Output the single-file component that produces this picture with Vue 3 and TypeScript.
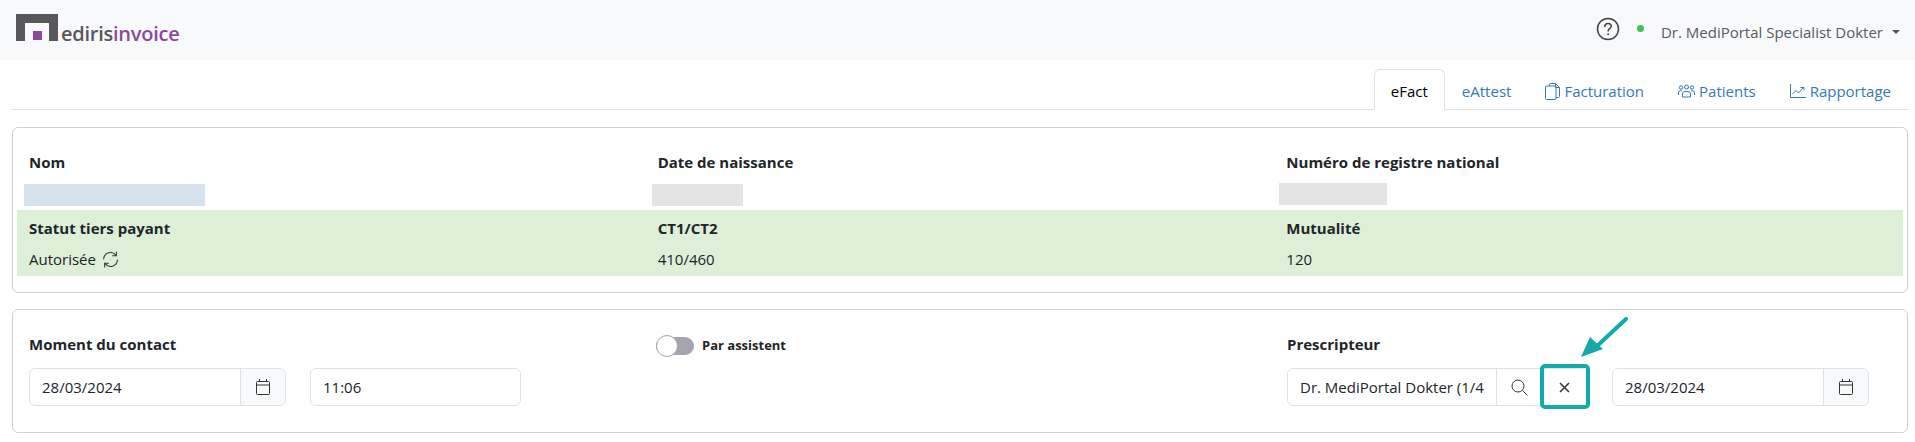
<template>
  <div class="page">
    <header class="topbar">
      <div class="logo">
        <svg class="logo-mark" width="44" height="27" viewBox="0 0 44 27">
          <path d="M0 0h42v27h-9V9H9v18H0z" fill="#58585a" />
          <rect x="17" y="17" width="9" height="9" fill="#8b4a9c" />
        </svg>
        <span class="logo-grey">ediris</span><span class="logo-purple">invoice</span>
      </div>
      <div class="user-area">
        <svg class="help" width="24" height="24" viewBox="0 0 24 24" fill="none" stroke="#444" stroke-width="1.5">
          <circle cx="12" cy="12" r="10.5" />
          <path d="M8.8 9.4c0-1.9 1.4-3 3.3-3 1.8 0 3.2 1.1 3.2 2.8 0 2.4-3.2 2.5-3.2 4.9" stroke-linecap="round" />
          <circle cx="12.1" cy="17.3" r="1" fill="#444" stroke="none" />
        </svg>
        <span class="status-dot"></span>
        <span class="user-name">Dr. MediPortal Specialist Dokter</span>
        <span class="caret"></span>
      </div>
    </header>

    <main class="content">
      <nav class="tabs">
        <a class="tab active">eFact</a>
        <a class="tab">eAttest</a>
        <a class="tab">
          <svg width="15" height="17" viewBox="0 0 15 17" fill="none" stroke="currentColor" stroke-width="1">
            <path d="M4.500 3V1.500a1 1 0 0 1 1-1h5l4 4v9a1 1 0 0 1-1 1h-2.500" />
            <rect x="0.500" y="3" width="10.500" height="13.500" rx="1" />
            <path d="M10.500.5v4h4" />
          </svg>
          Facturation
        </a>
        <a class="tab">
          <svg width="17" height="14" viewBox="0 0 17 14" fill="none" stroke="currentColor" stroke-width="1">
            <circle cx="8.500" cy="3" r="2" />
            <circle cx="3" cy="3.500" r="1.700" />
            <circle cx="14" cy="3.500" r="1.700" />
            <path d="M4.500 13v-3a2.500 2.500 0 0 1 2.500-2.500h3a2.500 2.500 0 0 1 2.500 2.500v3z" />
            <path d="M.5 11V8.500A1.800 1.800 0 0 1 2.300 6.800H4M16.500 11V8.500a1.800 1.800 0 0 0-1.800-1.700H13" />
          </svg>
          Patients
        </a>
        <a class="tab">
          <svg width="16" height="14" viewBox="0 0 16 14" fill="none" stroke="currentColor" stroke-width="1">
            <path d="M.5 0v13.500H16" />
            <path d="M2.500 10l3.500-3.500 2.500 2.500 5-5.500" />
            <path d="M10.500 3.500h3.500v3" />
          </svg>
          Rapportage
        </a>
      </nav>

      <section class="card patient-card">
        <div class="info-row">
          <div class="info-cell">
            <div class="label">Nom</div>
            <div class="redacted redacted-name"></div>
          </div>
          <div class="info-cell">
            <div class="label">Date de naissance</div>
            <div class="redacted redacted-birth"></div>
          </div>
          <div class="info-cell">
            <div class="label">Numéro de registre national</div>
            <div class="redacted redacted-nrn"></div>
          </div>
        </div>
        <div class="info-row insured">
          <div class="info-cell">
            <div class="label">Statut tiers payant</div>
            <div class="value">
              Autorisée
              <svg class="refresh" width="17" height="17" viewBox="0 0 16 16" fill="none" stroke="#333" stroke-width="1" stroke-linecap="round">
                <path d="M1.500 7.500A6.500 6.500 0 0 1 13 3.800" />
                <path d="M14.500 8.500A6.500 6.500 0 0 1 3 12.200" />
                <path d="M13.500 1v3.500H10M2.500 15v-3.500H6" />
              </svg>
            </div>
          </div>
          <div class="info-cell">
            <div class="label">CT1/CT2</div>
            <div class="value">410/460</div>
          </div>
          <div class="info-cell">
            <div class="label">Mutualité</div>
            <div class="value">120</div>
          </div>
        </div>
      </section>

      <section class="card contact-card">
        <div class="contact-col">
          <div class="label">Moment du contact</div>
          <div class="field-line">
            <div class="input-group date-group">
              <span class="input-text">28/03/2024</span>
              <span class="addon">
                <svg width="14" height="16" viewBox="0 0 14 16" fill="none" stroke="#333" stroke-width="1">
                  <rect x="0.500" y="2.500" width="13" height="13" rx="1" />
                  <path d="M0.500 6h13M3.500 0v2.500M10.500 0v2.500" />
                </svg>
              </span>
            </div>
            <div class="input-group time-group">
              <span class="input-text">11:06</span>
            </div>
          </div>
        </div>

        <div class="contact-col toggle-col">
          <div class="toggle">
            <span class="toggle-track"></span>
            <span class="toggle-knob"></span>
          </div>
          <span class="toggle-label">Par assistent</span>
        </div>

        <div class="contact-col">
          <div class="label">Prescripteur</div>
          <div class="field-line">
            <div class="input-group prescriber-group">
              <span class="input-text">Dr. MediPortal Dokter (1/4</span>
              <span class="addon plain">
                <svg width="17" height="17" viewBox="0 0 17 17" fill="none" stroke="#333" stroke-width="1">
                  <circle cx="7" cy="7" r="6" />
                  <path d="M11.500 11.500l5 5" />
                </svg>
              </span>
              <span class="addon plain clear">
                <svg width="11" height="11" viewBox="0 0 11 11" fill="none" stroke="#333" stroke-width="1.500">
                  <path d="M1 1l9 9M10 1l-9 9" />
                </svg>
              </span>
              <span class="highlight"></span>
              <svg class="arrow" width="50" height="42" viewBox="0 0 50 42">
                <path d="M47 2L17 30" stroke="#14a9ab" stroke-width="4" stroke-linecap="round" fill="none" />
                <path d="M2 40L11 20L24 32z" fill="#14a9ab" />
              </svg>
            </div>
            <div class="input-group date-group second">
              <span class="input-text">28/03/2024</span>
              <span class="addon">
                <svg width="14" height="16" viewBox="0 0 14 16" fill="none" stroke="#333" stroke-width="1">
                  <rect x="0.500" y="2.500" width="13" height="13" rx="1" />
                  <path d="M0.500 6h13M3.500 0v2.500M10.500 0v2.500" />
                </svg>
              </span>
            </div>
          </div>
        </div>
      </section>
    </main>
  </div>
</template>

<script setup lang="ts">
</script>

<style>
html,
body {
  margin: 0;
  background: #fff;
}
</style>

<style scoped>
.page {
  font-family: "Open Sans", "Noto Sans", sans-serif;
  font-size: 15px;
  line-height: 21px;
  color: #212529;
}

.topbar {
  height: 60px;
  box-sizing: border-box;
  background: #f8f9fa;
  display: flex;
  justify-content: space-between;
  padding: 0 15px 0 16px;
}

.logo {
  display: flex;
  align-items: flex-end;
  height: 47px;
  font-size: 20px;
  line-height: 27px;
  font-weight: 600;
  letter-spacing: -0.25px;
}

.logo-mark {
  margin-right: 1px;
  margin-bottom: 6px;
}

.logo-grey {
  color: #58585a;
}

.logo-purple {
  color: #8b4a9c;
}

.user-area {
  display: flex;
  align-items: center;
  height: 58px;
}

.help {
  margin-right: 17px;
}

.status-dot {
  width: 7px;
  height: 7px;
  border-radius: 50%;
  background: #3fc04f;
  margin-right: 17px;
  margin-top: -2px;
}

.user-name {
  color: #555c63;
  margin-top: 7px;
}

.caret {
  width: 0;
  height: 0;
  border-left: 4px solid transparent;
  border-right: 4px solid transparent;
  border-top: 4px solid #555;
  margin-left: 9px;
  margin-top: 6px;
}

.content {
  padding: 9px 7px 0 12px;
}

.tabs {
  display: flex;
  justify-content: flex-end;
  height: 41px;
  box-sizing: border-box;
  border-bottom: 1px solid #dee2e6;
  margin-bottom: 17px;
}

.tab {
  display: flex;
  align-items: center;
  gap: 4px;
  height: 41px;
  box-sizing: border-box;
  padding: 3px 16px 0;
  border: 1px solid transparent;
  border-radius: 6px 6px 0 0;
  color: #337ab7;
}

.tab.active {
  color: #000;
  background: #fff;
  border-color: #dee2e6 #dee2e6 #fff;
}

.card {
  border: 1px solid #d0d0d0;
  border-radius: 6px;
  box-sizing: border-box;
  background: #fff;
}

.patient-card {
  padding: 16px 4px;
  height: 166px;
  margin-bottom: 16px;
}

.info-row {
  display: grid;
  grid-template-columns: repeat(3, 1fr);
  height: 66px;
}

.insured {
  background: #deefd8;
}

.info-cell {
  padding: 8px 12px 0;
}

.label {
  font-weight: 700;
  color: #212529;
}

.value {
  margin-top: 10px;
  display: flex;
  align-items: center;
  gap: 5px;
}

.redacted {
  height: 22px;
  margin-top: 11px;
}

.redacted-name {
  width: 181px;
  margin-left: -5px;
  background: #d6e3ee;
}

.redacted-birth {
  width: 91px;
  margin-left: -6px;
  background: #e4e4e4;
}

.redacted-nrn {
  width: 108px;
  margin-left: -7px;
  margin-top: 10px;
  background: #e4e4e4;
}

.refresh {
  margin-left: 1px;
}

.contact-card {
  height: 124px;
  padding: 24px 4px 0 16px;
  display: grid;
  grid-template-columns: 629px 629px 1fr;
}

.field-line {
  display: flex;
  margin-top: 13px;
}

.input-group {
  display: flex;
  height: 38px;
  box-sizing: border-box;
  border: 1px solid #dee2e6;
  border-radius: 6px;
  background: #fff;
  position: relative;
}

.input-text {
  flex: 1;
  display: flex;
  align-items: center;
  padding: 0 12px;
  white-space: nowrap;
  overflow: hidden;
}

.addon {
  width: 44px;
  flex: none;
  display: flex;
  align-items: center;
  justify-content: center;
  background: #f8f9fa;
  border-left: 1px solid #dee2e6;
  border-radius: 0 6px 6px 0;
}

.addon.plain {
  background: #fff;
  border-radius: 0;
}

.addon.clear {
  border-left: none;
  width: 46px;
}

.date-group {
  width: 257px;
}

.date-group.second {
  margin-left: 24px;
}

.time-group {
  width: 211px;
  margin-left: 24px;
}

.prescriber-group {
  width: 301px;
}

.highlight {
  position: absolute;
  right: -3px;
  top: -5px;
  width: 50px;
  height: 45px;
  box-sizing: border-box;
  border: 4px solid #14a9ab;
  border-radius: 5px;
}

.arrow {
  position: absolute;
  left: 291px;
  top: -52px;
}

.toggle-col {
  display: flex;
  align-items: flex-start;
  gap: 8px;
  margin-left: -2px;
}

.toggle {
  position: relative;
  width: 38px;
  height: 22px;
  margin-top: 1px;
}

.toggle-track {
  position: absolute;
  left: 0;
  top: 2px;
  width: 38px;
  height: 18px;
  border-radius: 9px;
  background: #a5a5ae;
}

.toggle-knob {
  position: absolute;
  left: 0;
  top: 0;
  width: 22px;
  height: 22px;
  box-sizing: border-box;
  border-radius: 50%;
  background: #fff;
  border: 1px solid #a5a5ae;
}

.toggle-label {
  font-size: 13px;
  font-weight: 700;
  margin-top: 1px;
}
</style>
